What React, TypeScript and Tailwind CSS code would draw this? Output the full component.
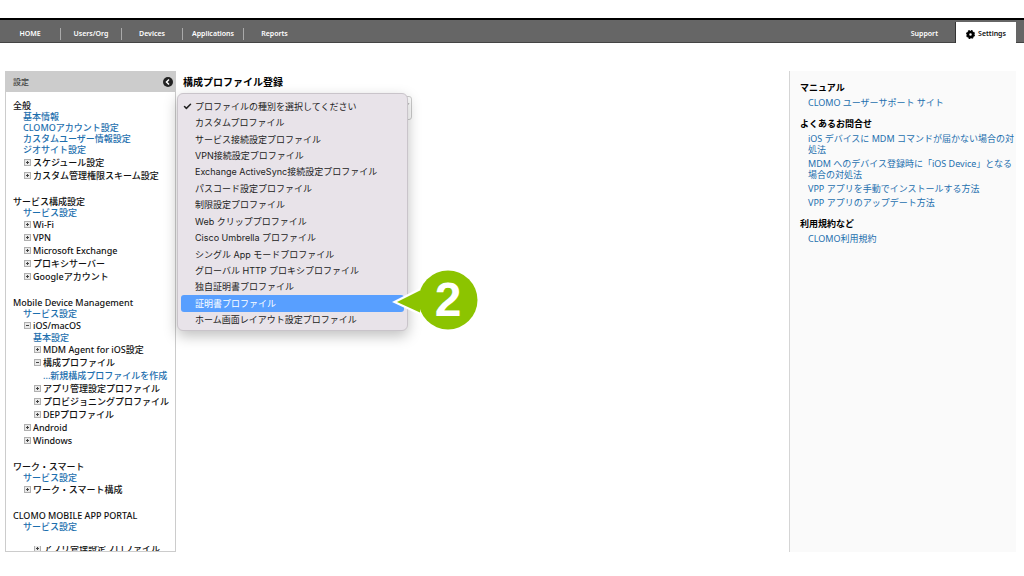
import React, { useState } from 'react';
import { Check, ChevronDown } from 'lucide-react';

interface TreeItem {
  label: string;
  kind: 'link' | 'open' | 'closed';
  level?: 0 | 1 | 2;
}

interface TreeSection {
  title: string;
  links: string[];
  items: TreeItem[];
}

const navItems = ['HOME', 'Users/Org', 'Devices', 'Applications', 'Reports'];

const sections: TreeSection[] = [
  {
    title: '全般',
    links: ['基本情報', 'CLOMOアカウント設定', 'カスタムユーザー情報設定', 'ジオサイト設定'],
    items: [
      { label: 'スケジュール設定', kind: 'closed' },
      { label: 'カスタム管理権限スキーム設定', kind: 'closed' },
    ],
  },
  {
    title: 'サービス構成設定',
    links: ['サービス設定'],
    items: [
      { label: 'Wi-Fi', kind: 'closed' },
      { label: 'VPN', kind: 'closed' },
      { label: 'Microsoft Exchange', kind: 'closed' },
      { label: 'プロキシサーバー', kind: 'closed' },
      { label: 'Googleアカウント', kind: 'closed' },
    ],
  },
  {
    title: 'Mobile Device Management',
    links: ['サービス設定'],
    items: [
      { label: 'iOS/macOS', kind: 'open' },
      { label: '基本設定', kind: 'link', level: 1 },
      { label: 'MDM Agent for iOS設定', kind: 'closed', level: 1 },
      { label: '構成プロファイル', kind: 'open', level: 1 },
      { label: '...新規構成プロファイルを作成', kind: 'link', level: 2 },
      { label: 'アプリ管理設定プロファイル', kind: 'closed', level: 1 },
      { label: 'プロビジョニングプロファイル', kind: 'closed', level: 1 },
      { label: 'DEPプロファイル', kind: 'closed', level: 1 },
      { label: 'Android', kind: 'closed' },
      { label: 'Windows', kind: 'closed' },
    ],
  },
  {
    title: 'ワーク・スマート',
    links: ['サービス設定'],
    items: [{ label: 'ワーク・スマート構成', kind: 'closed' }],
  },
  {
    title: 'CLOMO MOBILE APP PORTAL',
    links: ['サービス設定'],
    items: [],
  },
];

const profileTypes = [
  'プロファイルの種別を選択してください',
  'カスタムプロファイル',
  'サービス接続設定プロファイル',
  'VPN接続設定プロファイル',
  'Exchange ActiveSync接続設定プロファイル',
  'パスコード設定プロファイル',
  '制限設定プロファイル',
  'Web クリッププロファイル',
  'Cisco Umbrella プロファイル',
  'シングル App モードプロファイル',
  'グローバル HTTP プロキシプロファイル',
  '独自証明書プロファイル',
  '証明書プロファイル',
  'ホーム画面レイアウト設定プロファイル',
];

const helpGroups = [
  { title: 'マニュアル', links: [['CLOMO ユーザーサポート サイト']] },
  {
    title: 'よくあるお問合せ',
    links: [
      ['iOS デバイスに MDM コマンドが届かない場合の対', '処法'],
      ['MDM へのデバイス登録時に「iOS Device」となる', '場合の対処法'],
      ['VPP アプリを手動でインストールする方法'],
      ['VPP アプリのアップデート方法'],
    ],
  },
  { title: '利用規約など', links: [['CLOMO利用規約']] },
];

const ToggleIcon: React.FC<{ open: boolean }> = ({ open }) => (
  <svg width="7" height="7" viewBox="0 0 7 7" className="shrink-0" aria-hidden="true">
    <rect x="0.5" y="0.5" width="6" height="6" fill="#e9e9e9" stroke="#b0b0b0" />
    <path d={open ? 'M2 3.5H5' : 'M2 3.5H5M3.5 2V5'} stroke="#444" />
  </svg>
);

const TreeRow: React.FC<{ item: TreeItem }> = ({ item }) => {
  if (item.kind === 'link') {
    return (
      <li className={`flex items-center ${item.level === 2 ? 'h-[13px] pl-[30px]' : 'h-[11px] pl-5'}`}>
        <a href="#" className="whitespace-nowrap text-[#1d6fae]">{item.label}</a>
      </li>
    );
  }
  return (
    <li className={item.level === 1 ? 'pl-[21px]' : 'pl-[11px]'}>
      <button className="flex h-[13px] items-center gap-[2px] whitespace-nowrap">
        <ToggleIcon open={item.kind === 'open'} />
        {item.label}
      </button>
    </li>
  );
};

const GearIcon = () => (
  <svg width="9" height="9" viewBox="0 0 18 18" aria-hidden="true">
    <circle cx="9" cy="9" r="5" fill="none" stroke="#000" strokeWidth="5" />
    <circle cx="9" cy="9" r="7.8" fill="none" stroke="#000" strokeWidth="2.4" strokeDasharray="3.6 2.526" />
  </svg>
);

const StepCallout = () => (
  <div className="pointer-events-none absolute -top-[25px] left-[209px] z-20 h-[60px] w-[88px]">
    <svg width="88" height="60" viewBox="0 0 88 60" aria-hidden="true">
      <path d="M2 32L32 17V46Z" fill="#fff" />
      <circle cx="58" cy="30" r="29.5" fill="#8cc400" />
      <path d="M7 32L30 20.5V42.5Z" fill="#8cc400" />
    </svg>
    <span className="absolute inset-y-0 right-0 flex w-[60px] items-center justify-center font-['Liberation_Sans',sans-serif] text-[48px] leading-none font-bold text-white">
      2
    </span>
  </div>
);

const App: React.FC = () => {
  const [selected, setSelected] = useState(profileTypes[0]);
  const highlighted = '証明書プロファイル';

  return (
    <div className="flex min-h-screen flex-col bg-white pt-[18px] pb-6 font-['Noto_Sans','Noto_Sans_CJK_JP',sans-serif] text-[#111]">
      <header className="flex h-[25px] items-stretch justify-between border-t-2 border-b border-t-black border-b-[#444] bg-[#666] text-[7px] font-semibold text-white">
        <nav className="flex items-center pt-1.5">
          {navItems.map((item, i) => (
            <a
              key={item}
              href="#"
              className={`flex h-3 w-[61px] items-center justify-center ${i < navItems.length - 1 ? 'border-r border-[#aaa]' : ''}`}
            >
              {item}
            </a>
          ))}
        </nav>
        <div className="flex items-stretch pr-2">
          <a href="#" className="flex items-center pt-1.5 pr-[17px]">Support</a>
          <a href="#" className="mt-[2px] -mb-px flex w-[61px] items-center justify-center gap-[3px] border-l border-[#333] bg-white pt-1 text-[#111]">
            <GearIcon />
            Settings
          </a>
        </div>
      </header>

      <div className="mt-7 flex flex-1 items-stretch pr-2 pl-[5px]">
        <aside className="w-[171px] shrink-0 border border-[#ccc] text-[9px] leading-none font-medium">
          <div className="flex h-5 items-center justify-between bg-[#ccc] pr-[2px] pl-[7px] text-[8px] text-[#444]">
            設定
            <button aria-label="メニューを閉じる">
              <svg width="10" height="10" viewBox="0 0 10 10">
                <circle cx="5" cy="5" r="5" fill="#222" />
                <path d="M6 2.5L3.5 5L6 7.5" fill="none" stroke="#fff" strokeWidth="1.5" />
              </svg>
            </button>
          </div>
          <div className="flex flex-col gap-3.5 pt-2 pl-[7px]">
            {sections.map((section) => (
              <section key={section.title}>
                <h2 className="flex h-[11px] items-center whitespace-nowrap">{section.title}</h2>
                <ul className={section.links.length > 1 ? 'pb-px' : ''}>
                  {section.links.map((link) => (
                    <li key={link} className="flex h-[11px] items-center pl-[10px]">
                      <a href="#" className="whitespace-nowrap text-[#1d6fae]">{link}</a>
                    </li>
                  ))}
                </ul>
                <ul>
                  {section.items.map((item) => (
                    <TreeRow key={item.label} item={item} />
                  ))}
                </ul>
              </section>
            ))}
            <ul className="flex h-[5px] items-center overflow-hidden">
              <TreeRow item={{ label: 'アプリ管理設定プロファイル', kind: 'closed', level: 1 }} />
            </ul>
          </div>
        </aside>

        <main className="flex-1 pt-1 pl-[7px]">
          <h1 className="text-[10px] leading-[14px] font-bold text-black">
            <label htmlFor="profile-type">構成プロファイル登録</label>
          </h1>
          <div className="relative mt-1 w-[229px]">
            <select
              id="profile-type"
              value={selected}
              onChange={(e) => setSelected(e.target.value)}
              className="h-6 w-full appearance-none rounded-[3px] border border-[#ccc] bg-white px-3 text-[9px]"
            >
              {profileTypes.map((type) => (
                <option key={type}>{type}</option>
              ))}
            </select>
            <ChevronDown size={10} className="absolute top-[7px] right-px text-[#444]" />

            <div
              role="listbox"
              aria-label="プロファイルの種別"
              className="absolute top-0 -left-1.5 z-10 grid h-[238px] w-[231px] auto-rows-fr rounded-md border border-[#c9c4ca] bg-[#e8e3e9] px-[3px] pt-1 pb-[2px] font-['Inter','Noto_Sans_CJK_JP',sans-serif] text-[9px] leading-none text-[#222] shadow-[0_5px_14px_rgba(0,0,0,0.25)]"
            >
              {profileTypes.map((type) => (
                <div key={type} className="relative flex">
                  <button
                    role="option"
                    aria-selected={type === selected}
                    onClick={() => setSelected(type)}
                    className={`flex flex-1 items-center rounded-[3px] whitespace-nowrap ${type === highlighted ? 'bg-[#589fff] text-white' : ''}`}
                  >
                    <span className="flex w-[14px] pl-[2px]">
                      {type === selected && <Check size={9} strokeWidth={4} />}
                    </span>
                    {type}
                  </button>
                  {type === highlighted && <StepCallout />}
                </div>
              ))}
            </div>
          </div>
        </main>

        <aside className="w-[227px] shrink-0 border-l border-[#d5d5d5] bg-[#fafafa] pt-[11px] pl-[10px] text-[9px] leading-[11px]">
          {helpGroups.map((group) => (
            <section key={group.title} className="mb-2.5">
              <h2 className="font-bold text-black">{group.title}</h2>
              <ul className="flex flex-col gap-[3px] pt-1 pl-2">
                {group.links.map((lines) => (
                  <li key={lines[0]}>
                    <a href="#" className="text-[#1d6fae]">
                      {lines.map((line) => (
                        <span key={line} className="block whitespace-nowrap">{line}</span>
                      ))}
                    </a>
                  </li>
                ))}
              </ul>
            </section>
          ))}
        </aside>
      </div>
    </div>
  );
};

export default App;
